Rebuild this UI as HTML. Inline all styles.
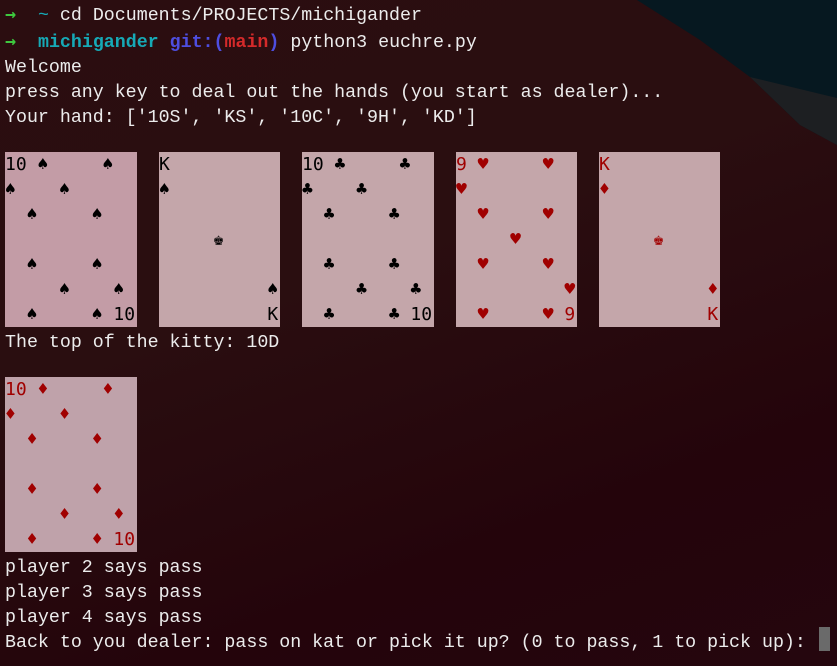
<!DOCTYPE html>
<html><head><meta charset="utf-8"><style>
html,body{margin:0;padding:0;width:837px;height:666px;overflow:hidden;}
body{position:relative;background:linear-gradient(160deg,#2b0d10 0%,#2a0e10 40%,#24040b 75%,#25060e 100%);font-family:"Liberation Mono","DejaVu Sans Mono",monospace;font-size:18.3px;color:#ececec;}
svg.bg{position:absolute;left:0;top:0;}
pre{margin:0;font:inherit;}
.t{position:absolute;left:5px;top:2px;line-height:25px;white-space:pre;}
.c{position:absolute;line-height:25px;white-space:pre;font-family:"DejaVu Sans Mono","Liberation Mono",monospace;font-size:18px;color:#000;background:#c4a6aa;height:175px;}
.r{color:#a00000;}
.g{color:#3ec83e;font-weight:bold;font-family:"DejaVu Sans Mono",monospace}.cy{color:#16a9b6;font-weight:bold}.b{color:#4e4ee0;font-weight:bold}.m{color:#d42a2a;font-weight:bold}
.cur{position:absolute;left:819px;top:627px;width:11px;height:24px;background:#6a6a6a;}
</style></head><body>
<svg class="bg" width="837" height="666">
<polygon points="637,0 837,0 837,145 800,125 750,77 700,40" fill="#061820"/>
<polygon points="750,77 837,98 837,145 800,125" fill="#1d1f22"/>
</svg>
<pre class="t"><span class="g">→</span>  <span class="cy" style="font-weight:normal">~</span> cd Documents/PROJECTS/michigander
<span class="g">→</span>  <span class="cy">michigander</span> <span class="b">git:(</span><span class="m">main</span><span class="b">)</span> python3 euchre.py
Welcome
press any key to deal out the hands (you start as dealer)...
Your hand: ['10S', 'KS', '10C', '9H', 'KD']








The top of the kitty: 10D








player 2 says pass
player 3 says pass
player 4 says pass
Back to you dealer: pass on kat or pick it up? (0 to pass, 1 to pick up): </pre>
<pre class="c" style="left:5px;top:152px;width:132px;background:#c39ca6">10 ♠     ♠
♠    ♠
  ♠     ♠

  ♠     ♠
     ♠    ♠
  ♠     ♠ 10</pre>
<pre class="c" style="left:159px;top:152px;width:121px">K
♠

     ♚

          ♠
          K</pre>
<pre class="c" style="left:302px;top:152px;width:132px">10 ♣     ♣
♣    ♣
  ♣     ♣

  ♣     ♣
     ♣    ♣
  ♣     ♣ 10</pre>
<pre class="c r" style="left:456px;top:152px;width:121px">9 ♥     ♥
♥
  ♥     ♥
     ♥
  ♥     ♥
          ♥
  ♥     ♥ 9</pre>
<pre class="c r" style="left:599px;top:152px;width:121px">K
♦

     ♚

          ♦
          K</pre>
<pre class="c r" style="left:5px;top:377px;width:132px;background:#bfa2aa">10 ♦     ♦
♦    ♦
  ♦     ♦

  ♦     ♦
     ♦    ♦
  ♦     ♦ 10</pre>
<div class="cur"></div>
</body></html>
